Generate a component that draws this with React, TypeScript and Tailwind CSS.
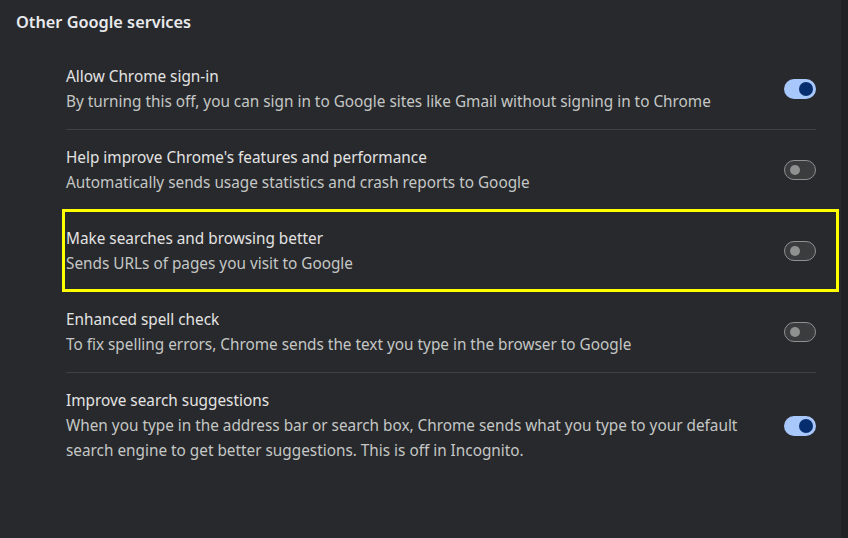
import React from "react"

type Item = { title: string; sub: string; on: boolean }

const items: Item[] = [
  {
    title: "Allow Chrome sign-in",
    sub: "By turning this off, you can sign in to Google sites like Gmail without signing in to Chrome",
    on: true,
  },
  {
    title: "Help improve Chrome's features and performance",
    sub: "Automatically sends usage statistics and crash reports to Google",
    on: false,
  },
  {
    title: "Make searches and browsing better",
    sub: "Sends URLs of pages you visit to Google",
    on: false,
  },
  {
    title: "Enhanced spell check",
    sub: "To fix spelling errors, Chrome sends the text you type in the browser to Google",
    on: false,
  },
  {
    title: "Improve search suggestions",
    sub: "When you type in the address bar or search box, Chrome sends what you type to your default search engine to get better suggestions. This is off in Incognito.",
    on: true,
  },
]

function Toggle({ on }: { on: boolean }) {
  if (on) {
    return (
      <div className="w-8 h-5 rounded-full bg-[#a8c7fa] flex items-center justify-end pr-[3px] shrink-0">
        <div className="w-[14px] h-[14px] rounded-full bg-[#062e6f]" />
      </div>
    )
  }
  return (
    <div className="w-8 h-5 rounded-full bg-[#3b3c3e] border border-[#8e918f] flex items-center pl-[5px] shrink-0">
      <div className="w-[10px] h-[10px] rounded-full bg-[#8e918f]" />
    </div>
  )
}

export default function App() {
  return (
    <div
      className="w-[848px] h-[538px] bg-[#202124] flex overflow-hidden"
      style={{ fontFamily: '"Noto Sans", "Open Sans", sans-serif' }}
    >
      <div className="w-[841px] h-full bg-[#28292c] relative">
        {/* 제목 */}
        <div className="pl-4 pt-[10px] text-[16.3px] leading-6 font-semibold text-[#e8eaed]">
          Other Google services
        </div>

        {/* 목록 */}
        <div className="ml-[66px] w-[750px] mt-[15px]">
          {items.map((it, i) => (
            <div
              key={it.title}
              className={`flex items-center gap-6 py-[15px] ${i < items.length - 1 ? "border-b border-[#3f4043]" : ""}`}
            >
              <div className="flex-1 text-[15.33px] leading-[25px]">
                <div className="text-[#e3e3e3]">{it.title}</div>
                <div className="text-[#c4c7c5]">{it.sub}</div>
              </div>
              <Toggle on={it.on} />
            </div>
          ))}
        </div>

        {/* 노란 강조 박스 */}
        <div className="absolute left-[62px] top-[209px] w-[777px] h-[83px] border-[3px] border-[#ffff00]" />
      </div>
    </div>
  )
}
